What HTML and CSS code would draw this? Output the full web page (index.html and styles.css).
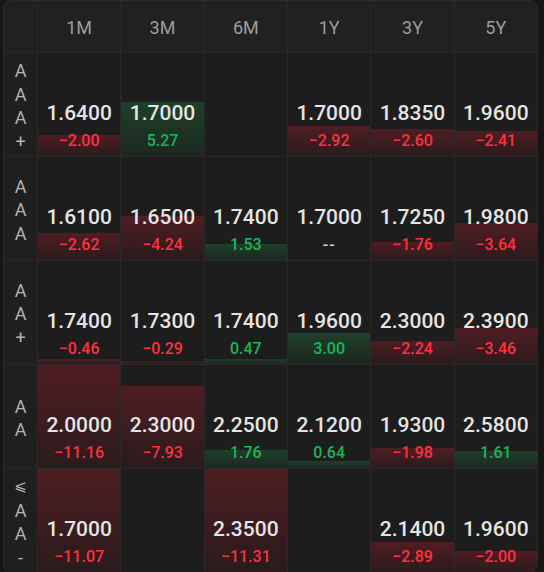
FILE: index.html
```html
<!DOCTYPE html>
<html>
<head>
<meta charset="utf-8">
<link rel="stylesheet" href="styles.css">
</head>
<body>
<div class="table">
  <div class="hd"></div>
  <div class="hd">1M</div>
  <div class="hd">3M</div>
  <div class="hd">6M</div>
  <div class="hd">1Y</div>
  <div class="hd">3Y</div>
  <div class="hd">5Y</div>

  <div class="lbl"><span>A</span><span>A</span><span>A</span><span>+</span></div>
  <div class="cell"><div class="bar neg" style="height:20%"></div><div class="val">1.6400</div><div class="chg neg">−2.00</div></div>
  <div class="cell"><div class="bar pos" style="height:52.7%"></div><div class="val">1.7000</div><div class="chg pos">5.27</div></div>
  <div class="cell"></div>
  <div class="cell"><div class="bar neg" style="height:29.2%"></div><div class="val">1.7000</div><div class="chg neg">−2.92</div></div>
  <div class="cell"><div class="bar neg" style="height:26%"></div><div class="val">1.8350</div><div class="chg neg">−2.60</div></div>
  <div class="cell"><div class="bar neg" style="height:24.1%"></div><div class="val">1.9600</div><div class="chg neg">−2.41</div></div>

  <div class="lbl"><span>A</span><span>A</span><span>A</span></div>
  <div class="cell"><div class="bar neg" style="height:26.2%"></div><div class="val">1.6100</div><div class="chg neg">−2.62</div></div>
  <div class="cell"><div class="bar neg" style="height:42.4%"></div><div class="val">1.6500</div><div class="chg neg">−4.24</div></div>
  <div class="cell"><div class="bar pos" style="height:15.3%"></div><div class="val">1.7400</div><div class="chg pos">1.53</div></div>
  <div class="cell"><div class="val">1.7000</div><div class="chg flat">--</div></div>
  <div class="cell"><div class="bar neg" style="height:17.6%"></div><div class="val">1.7250</div><div class="chg neg">−1.76</div></div>
  <div class="cell"><div class="bar neg" style="height:36.4%"></div><div class="val">1.9800</div><div class="chg neg">−3.64</div></div>

  <div class="lbl"><span>A</span><span>A</span><span>+</span></div>
  <div class="cell"><div class="bar neg" style="height:4.6%"></div><div class="val">1.7400</div><div class="chg neg">−0.46</div></div>
  <div class="cell"><div class="bar neg" style="height:2.9%"></div><div class="val">1.7300</div><div class="chg neg">−0.29</div></div>
  <div class="cell"><div class="bar pos" style="height:4.7%"></div><div class="val">1.7400</div><div class="chg pos">0.47</div></div>
  <div class="cell"><div class="bar pos" style="height:30%"></div><div class="val">1.9600</div><div class="chg pos">3.00</div></div>
  <div class="cell"><div class="bar neg" style="height:22.4%"></div><div class="val">2.3000</div><div class="chg neg">−2.24</div></div>
  <div class="cell"><div class="bar neg" style="height:34.6%"></div><div class="val">2.3900</div><div class="chg neg">−3.46</div></div>

  <div class="lbl"><span>A</span><span>A</span></div>
  <div class="cell"><div class="bar neg" style="height:100%"></div><div class="val">2.0000</div><div class="chg neg">−11.16</div></div>
  <div class="cell"><div class="bar neg" style="height:79.3%"></div><div class="val">2.3000</div><div class="chg neg">−7.93</div></div>
  <div class="cell"><div class="bar pos" style="height:17.6%"></div><div class="val">2.2500</div><div class="chg pos">1.76</div></div>
  <div class="cell"><div class="bar pos" style="height:6.4%"></div><div class="val">2.1200</div><div class="chg pos">0.64</div></div>
  <div class="cell"><div class="bar neg" style="height:19.8%"></div><div class="val">1.9300</div><div class="chg neg">−1.98</div></div>
  <div class="cell"><div class="bar pos" style="height:16.1%"></div><div class="val">2.5800</div><div class="chg pos">1.61</div></div>

  <div class="lbl"><span class="le">⩽</span><span>A</span><span>A</span><span>-</span></div>
  <div class="cell"><div class="bar neg" style="height:100%"></div><div class="val">1.7000</div><div class="chg neg">−11.07</div></div>
  <div class="cell"></div>
  <div class="cell"><div class="bar neg" style="height:100%"></div><div class="val">2.3500</div><div class="chg neg">−11.31</div></div>
  <div class="cell"></div>
  <div class="cell"><div class="bar neg" style="height:28.9%"></div><div class="val">2.1400</div><div class="chg neg">−2.89</div></div>
  <div class="cell"><div class="bar neg" style="height:20%"></div><div class="val">1.9600</div><div class="chg neg">−2.00</div></div>
</div>
</body>
</html>
```
FILE: styles.css
```css
html, body {
  margin: 0;
  padding: 0;
  background: #161616;
}
body {
  width: 544px;
  height: 572px;
  overflow: hidden;
  font-family: Roboto, "Noto Sans", "DejaVu Sans", sans-serif;
}
.table {
  margin-left: 3px;
  width: 535px;
  height: 573px;
  box-sizing: border-box;
  border: 1px solid #2a2a2a;
  border-radius: 8px;
  overflow: hidden;
  background: #292929;
  display: grid;
  grid-template-columns: 33px repeat(6, 1fr);
  grid-template-rows: 51px repeat(5, 103px);
  gap: 1px;
}
.hd {
  background: #212121;
  color: #9c9c9c;
  font-size: 18px;
  display: flex;
  align-items: center;
  justify-content: center;
  padding-top: 2px;
}
.lbl {
  background: #1f1f1f;
  color: #b4b4b4;
  font-size: 18px;
  display: flex;
  flex-direction: column;
  align-items: center;
  justify-content: center;
  line-height: 23.5px;
  padding-top: 3px;
}
.lbl .le {
  font-family: "DejaVu Sans", sans-serif;
  font-size: 15px;
}
.cell {
  position: relative;
  background: #1d1d1d;
  display: flex;
  flex-direction: column;
  align-items: center;
  justify-content: flex-end;
  padding-bottom: 4px;
}
.bar {
  position: absolute;
  left: 0;
  right: 0;
  bottom: 0;
}
.bar.neg {
  background: linear-gradient(180deg, #4f1d22 0%, #2b1b1c 100%);
}
.bar.pos {
  background: linear-gradient(180deg, #1e4029 0%, #1c2720 100%);
}
.val {
  position: relative;
  color: #e4e4e4;
  font-size: 21px;
  font-weight: 500;
  line-height: 26px;
  margin-bottom: 4px;
}
.chg {
  position: relative;
  font-size: 16px;
  font-weight: 500;
  line-height: 22px;
}
.chg.neg { color: #ff3040; }
.chg.pos { color: #1db457; }
.chg.flat { color: #cfcfcf; letter-spacing: 1px; }
```
